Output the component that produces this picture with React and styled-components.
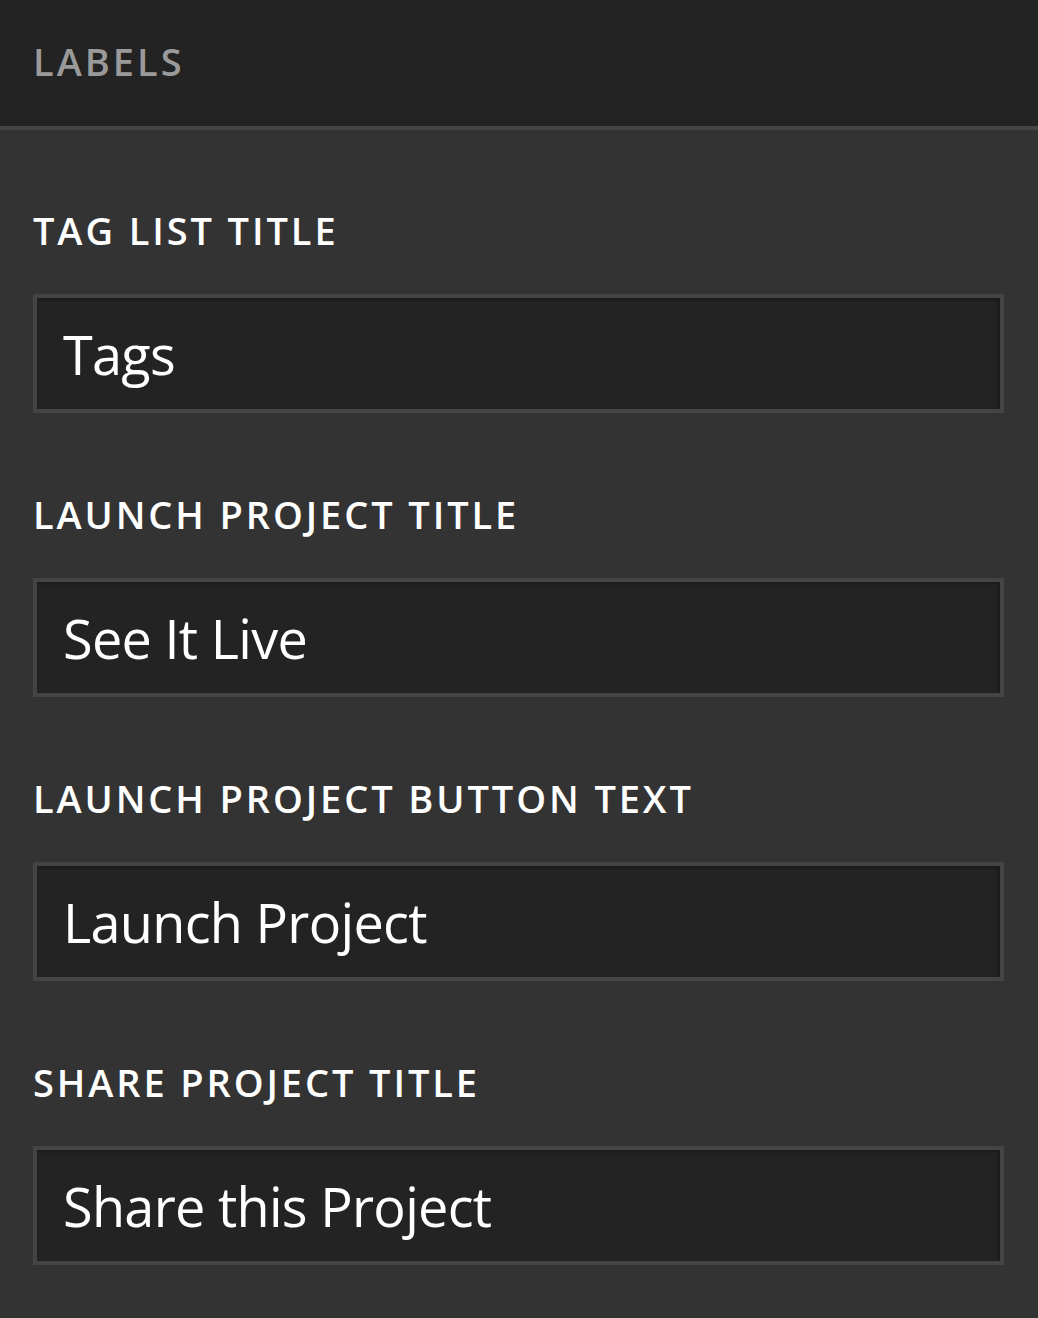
import styled, { createGlobalStyle } from 'styled-components';

const GlobalStyle = createGlobalStyle`
  html, body {
    margin: 0;
    padding: 0;
    background: #333333;
  }
  * {
    box-sizing: border-box;
  }
`;

const Panel = styled.div`
  width: 1038px;
  min-height: 1318px;
  background: #333333;
  font-family: 'Open Sans', 'Liberation Sans', sans-serif;
`;

const Header = styled.div`
  height: 130px;
  background: #232323;
  border-bottom: 4px solid #444444;
  padding: 0 33px;
  display: flex;
  align-items: center;
`;

const HeaderTitle = styled.h2`
  margin: 0 0 4px;
  font-size: 38px;
  line-height: 38px;
  font-weight: 600;
  letter-spacing: 3px;
  color: #9a9a9a;
`;

const Fields = styled.div`
  display: flex;
  flex-direction: column;
  gap: 82px;
  padding: 81px 34px 52px 33px;
`;

const Field = styled.div`
  display: flex;
  flex-direction: column;
  gap: 45px;
`;

const Label = styled.label`
  font-size: 38px;
  line-height: 38px;
  font-weight: 600;
  letter-spacing: 2.9px;
  color: #ffffff;
`;

const TextInput = styled.input`
  width: 100%;
  height: 119px;
  margin: 0;
  padding: 0 26px;
  border: 4px solid #444444;
  border-radius: 0;
  background: #232323;
  box-shadow: inset -2px 2px 3px rgba(0, 0, 0, 0.25);
  color: #ffffff;
  font-family: inherit;
  font-size: 54px;
  letter-spacing: -0.7px;
  line-height: 111px;
  outline: none;
`;

const fields = [
  { label: 'Tag List Title', value: 'Tags' },
  { label: 'Launch Project Title', value: 'See It Live' },
  { label: 'Launch Project Button Text', value: 'Launch Project' },
  { label: 'Share Project Title', value: 'Share this Project' }
];

function App() {
  return (
    <>
      <GlobalStyle />
      <Panel>
        <Header>
          <HeaderTitle>LABELS</HeaderTitle>
        </Header>
        <Fields>
          {fields.map((item) => (
            <Field key={item.label}>
              <Label>{item.label.toUpperCase()}</Label>
              <TextInput type="text" defaultValue={item.value} />
            </Field>
          ))}
        </Fields>
      </Panel>
    </>
  );
}

export default App;
